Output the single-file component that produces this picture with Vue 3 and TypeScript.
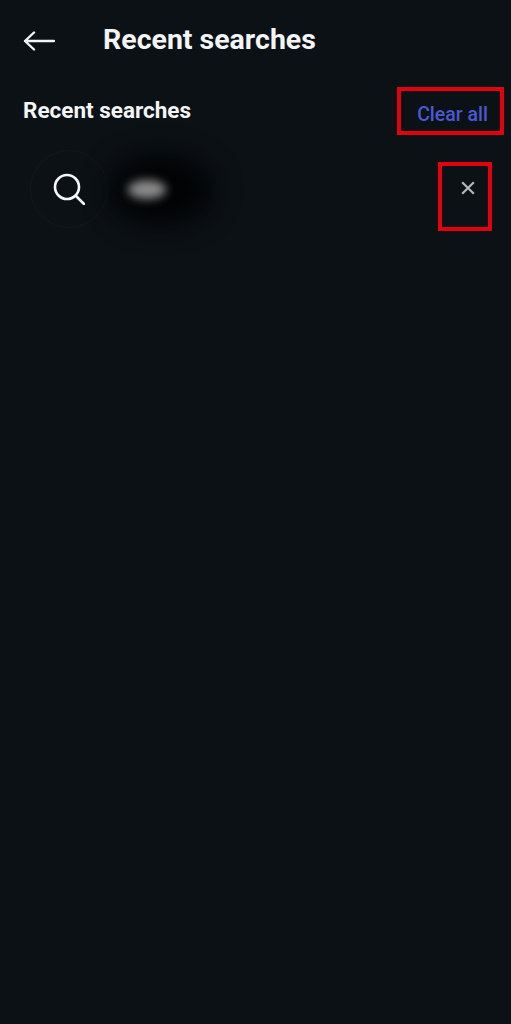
<script setup lang="ts">
const title: string = 'Recent searches'
</script>

<template>
  <main class="screen">
    <header class="topbar">
      <svg class="back" viewBox="0 0 32 20" fill="none" stroke="#f4f5f6" stroke-width="2.4" stroke-linecap="round" stroke-linejoin="round">
        <path d="M2 10H31M11 1.5 2 10l9 8.5" />
      </svg>
      <h1 class="title">{{ title }}</h1>
    </header>
    <section class="heading-row">
      <h2 class="subtitle">{{ title }}</h2>
      <button class="clear">Clear all<span class="mark mark-clear"></span></button>
    </section>
    <section class="row">
      <div class="circle">
        <svg class="search" viewBox="0 0 32 32" fill="none" stroke="#f6f7f8" stroke-width="2.6" stroke-linecap="round">
          <circle cx="14" cy="14" r="12" />
          <path d="M23 23l8 8" />
        </svg>
      </div>
      <div class="smudge"><span class="blob"></span><span class="spot"></span></div>
      <button class="remove">
        <svg viewBox="0 0 12 12" fill="none" stroke="#b4b6b8" stroke-width="1.9">
          <path d="M1 1l10 10M11 1 1 11" />
        </svg>
        <span class="mark mark-remove"></span>
      </button>
    </section>
  </main>
</template>

<style scoped>
.screen {
  width: 511px;
  height: 1024px;
  background: #0c1116;
  color: #f4f5f6;
  font-family: Roboto, "Liberation Sans", sans-serif;
  overflow: hidden;
}
.topbar {
  display: flex;
  align-items: center;
  height: 80px;
  padding-left: 23px;
}
.back {
  width: 32px;
  height: 20px;
  flex: none;
  margin-top: 2px;
}
.title {
  margin: 0 0 0 48px;
  font-size: 28.5px;
  font-weight: 700;
  line-height: 82px;
}
.heading-row {
  display: flex;
  justify-content: space-between;
  align-items: flex-start;
  padding: 16px 23px 0;
  height: 72px;
  box-sizing: border-box;
}
.subtitle {
  margin: 0;
  font-size: 22.5px;
  font-weight: 700;
  line-height: 28px;
}
.clear {
  position: relative;
  margin: 5px 0 0;
  padding: 0;
  border: 0;
  background: none;
  color: #4a59d2;
  font: 500 19.5px/28px Roboto, "Liberation Sans", sans-serif;
}
.mark {
  position: absolute;
  border: 4px solid #e3000f;
  box-sizing: border-box;
}
.mark-clear {
  left: -20px;
  top: -14px;
  width: 107px;
  height: 48px;
}
.row {
  display: flex;
  align-items: center;
  height: 80px;
  margin-top: -2px;
  padding-left: 30px;
}
.circle {
  width: 78px;
  height: 78px;
  flex: none;
  display: flex;
  align-items: center;
  justify-content: center;
  border-radius: 50%;
  border: 1px solid #12171c;
  box-sizing: border-box;
  margin-top: -3px;
}
.search {
  width: 32px;
  height: 32px;
}
.smudge {
  position: relative;
  width: 119px;
  height: 80px;
  flex: none;
}
.blob {
  position: absolute;
  left: 0;
  top: 4px;
  width: 106px;
  height: 72px;
  border-radius: 50%;
  background: #020304;
  filter: blur(13px);
}
.spot {
  position: absolute;
  left: 20px;
  top: 30px;
  width: 38px;
  height: 19px;
  border-radius: 50%;
  background: #8a8a8a;
  filter: blur(5px);
}
.remove {
  position: relative;
  width: 14px;
  height: 14px;
  margin: -4px 0 0 234px;
  padding: 0;
  border: 0;
  background: none;
}
.remove svg {
  display: block;
  width: 14px;
  height: 14px;
}
.mark-remove {
  left: -23px;
  top: -19px;
  width: 54px;
  height: 69px;
}
</style>
